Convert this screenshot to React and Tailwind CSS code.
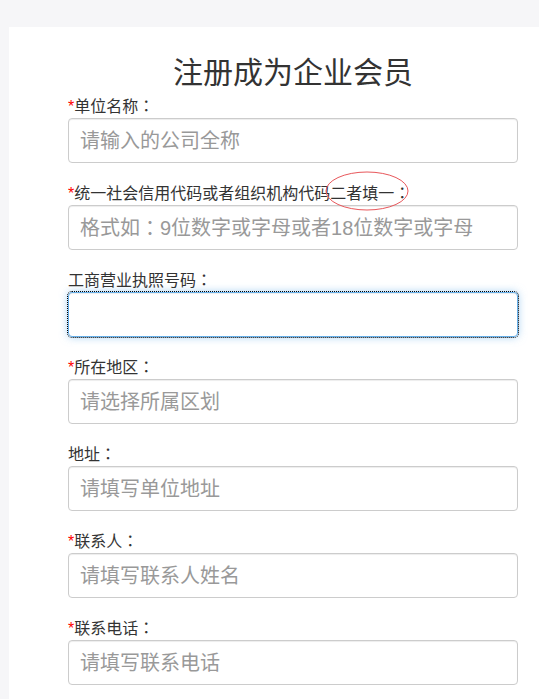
import React from "react";

const fields = [
  { label: "单位名称", req: true, ph: "请输入的公司全称" },
  { label: "统一社会信用代码或者组织机构代码二者填一", req: true, ph: "格式如：9位数字或字母或者18位数字或字母", circle: true },
  { label: "工商营业执照号码", req: false, ph: "", focus: true },
  { label: "所在地区", req: true, ph: "请选择所属区划" },
  { label: "地址", req: false, ph: "请填写单位地址" },
  { label: "联系人", req: true, ph: "请填写联系人姓名" },
  { label: "联系电话", req: true, ph: "请填写联系电话" },
];

const Colon = () => (
  <span style={{ fontFamily: '"Noto Sans CJK TC", sans-serif' }}>：</span>
);

function Ph({ text }) {
  const parts = text.split("：");
  if (parts.length === 1) return text;
  return (
    <>
      {parts[0]}
      <Colon />
      {parts[1]}
    </>
  );
}

export default function App() {
  return (
    <div
      className="w-[539px] h-[699px] overflow-hidden bg-[#f6f6f8] pt-[27px] pl-[9px]"
      style={{ fontFamily: '"Liberation Sans", "Noto Sans CJK SC", sans-serif' }}
    >
      <div className="w-[600px] h-[700px] bg-white pt-[26px] pl-[59px]">
        <div className="w-[450px]">
          <h1 className="h-[40px] leading-[40px] text-[30px] text-center text-[#333] mb-[2px] font-normal">
            注册成为企业会员
          </h1>
          {fields.map((f, i) => (
            <div key={i} className="mb-[19px]">
              <div className="relative h-[20px] leading-[20px] text-[16px] text-[#333] mb-[3px] whitespace-nowrap">
                {f.req && <span className="text-[#f00]">*</span>}
                {f.label}
                <Colon />
                {f.circle && (
                  <svg className="absolute left-[257px] top-[-11px]" width="84" height="40" viewBox="0 0 84 40">
                    <ellipse cx="42" cy="20" rx="41" ry="19" fill="none" stroke="#e8575b" strokeWidth="1" />
                  </svg>
                )}
              </div>
              {f.focus ? (
                <div className="h-[45px] rounded-[4px] border border-[#66afe9] outline outline-1 outline-dotted outline-black shadow-[inset_0_1px_1px_rgba(0,0,0,0.075),0_0_8px_rgba(102,175,233,0.6)] bg-white" />
              ) : (
                <div className="h-[45px] rounded-[4px] border border-[#ccc] bg-white flex items-center pl-[11px] text-[20px] text-[#999] whitespace-nowrap shadow-[inset_0_1px_1px_rgba(0,0,0,0.075)]">
                  <Ph text={f.ph} />
                </div>
              )}
            </div>
          ))}
        </div>
      </div>
    </div>
  );
}
